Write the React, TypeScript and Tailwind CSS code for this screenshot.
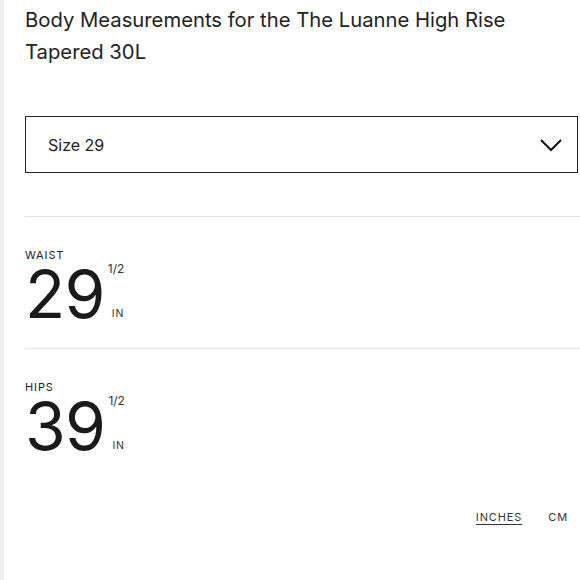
import React from "react";

function Measure({ label, value }: { label: string; value: string }) {
  return (
    <div className="flex flex-col">
      <div className="text-[11px] leading-[14px] tracking-[0.08em] text-[#222]">{label}</div>
      <div className="flex items-start mt-[2px]">
        <div className="text-[66px] leading-[60px] tracking-[-0.01em] text-[#1a1a1a]">{value}</div>
        <div className="flex flex-col ml-[3px] mt-[-1px] h-[57px] justify-between">
          <span className="text-[12px] leading-[12px] text-[#333]">1/2</span>
          <span className="text-[10.5px] leading-[12px] tracking-[0.08em] text-[#333] ml-[4px]">IN</span>
        </div>
      </div>
    </div>
  );
}

export default function App() {
  return (
    <div className="w-[580px] h-[580px] flex bg-white overflow-hidden" style={{ fontFamily: "Inter, 'Noto Sans', sans-serif" }}>
      <div className="w-[4px] shrink-0 bg-[#f0f0f0]" />
      <div className="flex-1 flex flex-col pl-[21px]">
        <h1 className="mt-[4px] text-[20.25px] leading-[32px] text-[#222] font-normal pr-[20px]">
          Body Measurements for the The Luanne High Rise Tapered 30L
        </h1>
        <div className="mt-[48px] mr-[2px] h-[57px] border-[1.5px] border-[#222] flex items-center justify-between pl-[22px] pr-[14px]">
          <span className="text-[16px] text-[#222]">Size 29</span>
          <svg width="24" height="16" viewBox="0 0 24 16" fill="none">
            <path d="M2 3 L12 13 L22 3" stroke="#111" strokeWidth="2" />
          </svg>
        </div>
        <div className="mt-[43px] h-px bg-[#e3e3e3]" />
        <div className="mt-[31px]">
          <Measure label="WAIST" value="29" />
        </div>
        <div className="mt-[24px] h-px bg-[#e3e3e3]" />
        <div className="mt-[31px]">
          <Measure label="HIPS" value="39" />
        </div>
        <div className="flex justify-end gap-[26px] mt-[54px] pr-[12px] text-[11px] leading-[14px] tracking-[0.08em] text-[#333]">
          <span className="underline underline-offset-[3px]">INCHES</span>
          <span>CM</span>
        </div>
      </div>
    </div>
  );
}
